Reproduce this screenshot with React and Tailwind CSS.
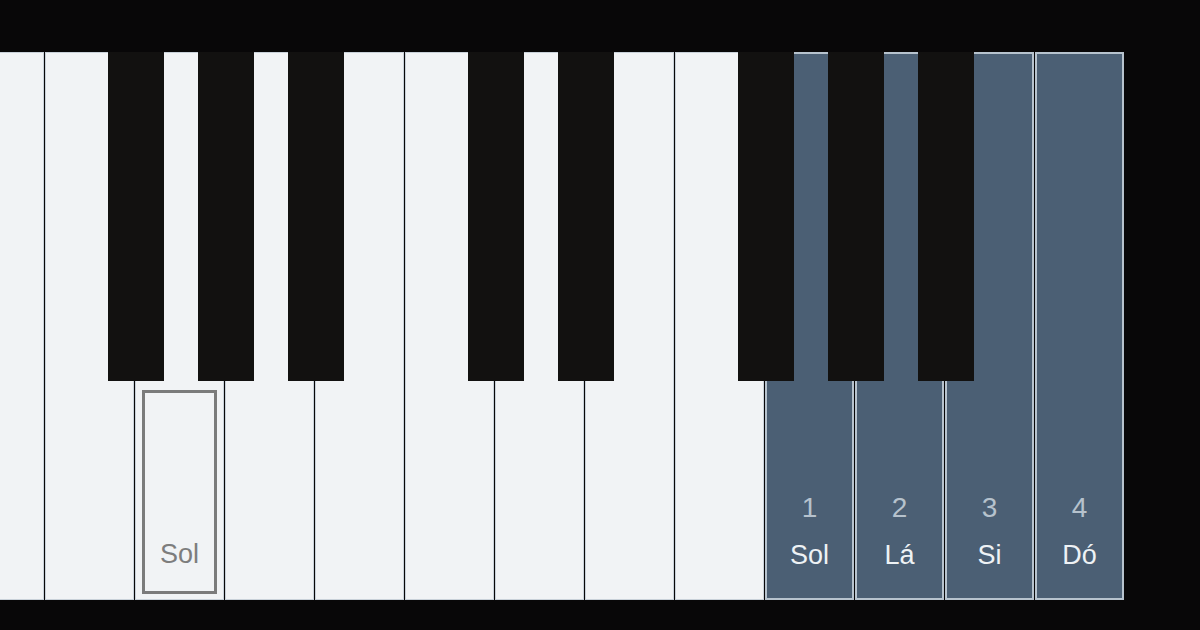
import React from 'react';

// White keys from E (partly off-screen) up to the next C.
const whiteKeys = [
  { note: 'Mi' },
  { note: 'Fá' },
  { note: 'Sol', marked: true },
  { note: 'Lá' },
  { note: 'Si' },
  { note: 'Dó' },
  { note: 'Ré' },
  { note: 'Mi' },
  { note: 'Fá' },
  { note: 'Sol', step: 1 },
  { note: 'Lá', step: 2 },
  { note: 'Si', step: 3 },
  { note: 'Dó', step: 4 },
];

// Black keys sit on the seam after these white key indexes.
const blackAfter = [1, 2, 3, 5, 6, 8, 9, 10];

const KEY_PITCH = 90;

const WhiteKey = ({ keyData }) => {
  const active = keyData.step != null;

  if (active) {
    return (
      <div className="w-[89px] h-[548px] shrink-0 bg-[#4b5f74] border-2 border-[#b7c3ce] flex flex-col items-center justify-end pb-[29px]">
        <span className="text-[28px] leading-[28px] text-[#b6c2cd]">{keyData.step}</span>
        <span className="mt-[20px] text-[27px] leading-[27px] text-[#eef2f5]">{keyData.note}</span>
      </div>
    );
  }

  return (
    <div className="w-[89px] h-[548px] shrink-0 bg-[#f1f3f5] border border-[#c9d1d9] flex flex-col justify-end px-[6px] pb-[5px]">
      {keyData.marked && (
        <div className="h-[204px] border-[3px] border-[#7b7b7b] flex items-end justify-center pb-[23px]">
          <span className="text-[27px] leading-[27px] text-[#7d7d7d]">{keyData.note}</span>
        </div>
      )}
    </div>
  );
};

export default function App() {
  return (
    <div
      className="w-[1200px] h-[630px] bg-[#080708] overflow-hidden pt-[52px]"
      style={{ fontFamily: '"Liberation Sans", Arial, sans-serif' }}
    >
      <div className="relative flex gap-px ml-[-45px] w-max">
        {whiteKeys.map((k, i) => (
          <WhiteKey key={i} keyData={k} />
        ))}

        {blackAfter.map((i) => (
          <div
            key={i}
            className="absolute top-0 w-[56px] h-[329px] bg-[#121110]"
            style={{ left: (i + 1) * KEY_PITCH - 27 }}
          />
        ))}
      </div>
    </div>
  );
}
